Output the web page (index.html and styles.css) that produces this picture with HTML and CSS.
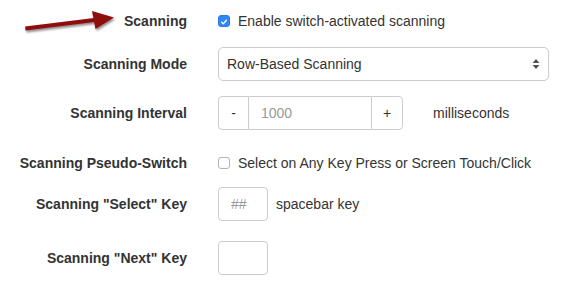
FILE: index.html
```html
<!DOCTYPE html>
<html lang="en">
<head>
<meta charset="UTF-8" />
<title>Scanning Settings</title>
<link rel="stylesheet" href="styles.css">
</head>
<body>

<svg class="pointer" width="130" height="40" viewBox="0 0 130 40" aria-hidden="true">
  <defs>
    <filter id="shade" x="-20%" y="-40%" width="140%" height="200%">
      <feDropShadow dx="1" dy="2" stdDeviation="1.3" flood-color="#000" flood-opacity="0.45"/>
    </filter>
  </defs>
  <g filter="url(#shade)" fill="#8e0b0e">
    <polygon points="25,26.5 94,18 94.6,22 25.6,30.5"/>
    <polygon points="92,11 114,17.5 95.5,29"/>
  </g>
</svg>

<form class="settings">
  <div class="row row-top">
    <span class="label">Scanning</span>
    <label class="check">
      <span class="box on">
        <svg width="12" height="12" viewBox="0 0 12 12"><path d="M3.2 6.3 L5.1 8.2 L8.9 3.9" fill="none" stroke="#fff" stroke-width="1.6" stroke-linecap="round" stroke-linejoin="round"/></svg>
      </span>
      Enable switch-activated scanning
    </label>
  </div>

  <div class="row row-mode">
    <span class="label">Scanning Mode</span>
    <div class="select-wrap">
      <select class="select">
        <option>Row-Based Scanning</option>
      </select>
      <svg class="select-arrows" width="8" height="12" viewBox="0 0 8 12" aria-hidden="true">
        <polygon points="4,1 7.5,5 0.5,5" fill="#555"/>
        <polygon points="4,11 7.5,7 0.5,7" fill="#555"/>
      </svg>
    </div>
  </div>

  <div class="row row-interval">
    <span class="label">Scanning Interval</span>
    <div class="field">
      <div class="spinner">
        <button type="button" class="spin-btn">-</button>
        <input class="spin-input" type="text" placeholder="1000">
        <button type="button" class="spin-btn spin-plus">+</button>
      </div>
      <span class="unit">milliseconds</span>
    </div>
  </div>

  <div class="row row-pseudo">
    <span class="label">Scanning Pseudo-Switch</span>
    <label class="check">
      <span class="box"></span>
      Select on Any Key Press or Screen Touch/Click
    </label>
  </div>

  <div class="row row-select">
    <span class="label">Scanning "Select" Key</span>
    <div class="field">
      <input class="key-input" type="text" placeholder="##">
      <span class="key-name">spacebar key</span>
    </div>
  </div>

  <div class="row">
    <span class="label">Scanning "Next" Key</span>
    <div class="field">
      <input class="key-input" type="text">
    </div>
  </div>
</form>

</body>
</html>
```

FILE: styles.css
```css
body {
  margin: 0;
  background: #fff;
  font-family: "Liberation Sans", Arial, sans-serif;
  font-size: 14px;
  color: #333;
}
.pointer {
  position: absolute;
  left: 0;
  top: 0;
}
.settings {
  padding-top: 11px;
}
.row {
  display: grid;
  grid-template-columns: 187px 331px;
  column-gap: 31px;
  align-items: center;
}
.label {
  text-align: right;
  font-weight: bold;
}
.row-top {
  height: 20px;
  margin-bottom: 16px;
}
.row-mode {
  margin-bottom: 15px;
}
.row-interval {
  margin-bottom: 23px;
}
.row-pseudo {
  height: 20px;
  margin-bottom: 14px;
}
.row-select {
  margin-bottom: 20px;
}
.check {
  display: flex;
  align-items: center;
  white-space: nowrap;
}
.box {
  width: 10px;
  height: 10px;
  border: 1px solid #b4b4b4;
  border-radius: 3px;
  background: #fff;
  margin-right: 8px;
  display: flex;
}
.box.on {
  background: #2f86f6;
  border-color: #2a7be6;
}
.select-wrap {
  position: relative;
}
.select {
  appearance: none;
  -webkit-appearance: none;
  width: 331px;
  height: 34px;
  padding: 0 8px;
  font-family: inherit;
  font-size: 14px;
  color: #333;
  background: #fff;
  border: 1px solid #ccc;
  border-radius: 5px;
}
.select-arrows {
  position: absolute;
  right: 9px;
  top: 11px;
}
.field {
  display: flex;
  align-items: center;
  white-space: nowrap;
}
.spinner {
  display: flex;
  height: 34px;
}
.spin-btn {
  width: 31px;
  height: 34px;
  padding: 0;
  font-family: inherit;
  font-size: 14px;
  color: #333;
  background: #fff;
  border: 1px solid #ccc;
  border-radius: 4px 0 0 4px;
}
.spin-plus {
  width: 32px;
  border-radius: 0 4px 4px 0;
}
.spin-input {
  width: 122px;
  height: 34px;
  box-sizing: border-box;
  padding: 0 12px;
  font-family: inherit;
  font-size: 14px;
  border: 1px solid #ccc;
  border-left: none;
  border-right: none;
  outline: none;
}
.spin-input::placeholder,
.key-input::placeholder {
  color: #999;
}
.unit {
  margin-left: 30px;
}
.key-input {
  width: 50px;
  height: 34px;
  box-sizing: border-box;
  padding: 0 12px;
  font-family: inherit;
  font-size: 14px;
  border: 1px solid #ccc;
  border-radius: 4px;
}
.key-name {
  margin-left: 8px;
}
```
